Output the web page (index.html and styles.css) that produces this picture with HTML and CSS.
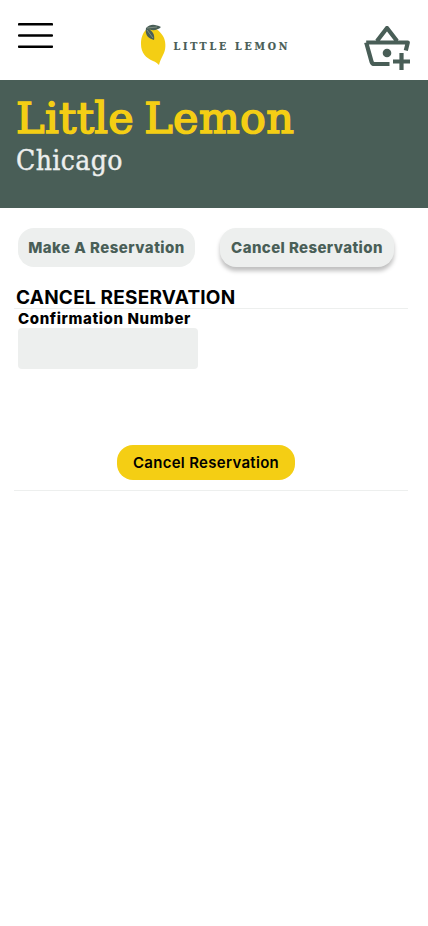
FILE: index.html
```html
<!DOCTYPE html>
<html lang="en">
<head>
<meta charset="utf-8">
<meta name="viewport" content="width=device-width, initial-scale=1">
<title>Little Lemon</title>
<link rel="stylesheet" href="styles.css">
</head>
<body>
<header class="topbar">
  <svg class="menu" viewBox="0 0 35 26" aria-label="Menu"><path d="M1 1.3h33M1 12.5h33M1 23.7h33"/></svg>
  <div class="brand">
    <svg class="lemon" viewBox="0 0 26 42">
      <path class="fruit" d="M7 5C2 9 1 15 1 20c0 9 5 14 12 17 3 1 4 2 6 4 1-4 2-6 4-10 3-5 3-12 1-17C21 7 13 1 7 5Z"/>
      <path class="leaf" d="M6 4c5-5 10-3 15-1-4 4-10 4-15 1ZM6 4c7 2 9 7 8 12C7 14 5 10 6 4Z"/>
      <path class="vein" d="M7 4l10-1M7 6l6 8"/>
    </svg>
    <span class="wordmark">LITTLE LEMON</span>
  </div>
  <svg class="basket" viewBox="0 0 46 44" aria-label="Basket">
    <path d="M2.2 16.5h41.6l-2 8M2.2 16.5l5.4 19.4q.6 2.1 2.8 2.1H25.5M13 15L23 2l10 13"/>
    <path d="M37.5 27v17M29 35.5h17"/>
    <circle cx="23" cy="27" r="4.3"/>
  </svg>
</header>
<section class="hero">
  <h1>Little Lemon</h1>
  <p>Chicago</p>
</section>
<nav class="tabs">
  <button class="tab make">Make A Reservation</button>
  <button class="tab cancel">Cancel Reservation</button>
</nav>
<main class="panel">
  <h2>CANCEL RESERVATION</h2>
  <form>
    <label for="confirmation">Confirmation Number</label>
    <input id="confirmation" type="text">
    <button class="submit" type="button">Cancel Reservation</button>
  </form>
</main>
</body>
</html>
```
FILE: styles.css
```css
* { box-sizing: border-box; margin: 0; padding: 0; }
body { background: #fff; color: #000; font-family: Inter, "Liberation Sans", sans-serif; }
button, input { border: 0; font: inherit; }
svg { display: block; }
.topbar { height: 80px; display: flex; justify-content: space-between; align-items: flex-start; padding: 0 18px; }
.menu { width: 35px; height: 26px; margin-top: 23px; fill: none; stroke: #000; stroke-width: 2.5; stroke-linecap: round; }
.brand { display: flex; align-items: flex-start; width: 150px; margin: 24px 0 0 12px; }
.lemon { width: 26px; height: 42px; flex: none; }
.fruit { fill: #f4ce14; }
.leaf { fill: #495e57; }
.vein { fill: none; stroke: #a5b09f; stroke-width: .6; }
.wordmark { margin: 14px 0 0 8px; font: bold 10.5px/16px "DejaVu Serif Condensed", "DejaVu Serif", serif; letter-spacing: 2.8px; -webkit-text-stroke: .2px #495e57; color: #495e57; white-space: nowrap; }
.basket { width: 46px; height: 44px; margin-top: 26px; fill: none; stroke: #495e57; stroke-width: 4.2; stroke-linejoin: round; }
.basket circle { fill: #495e57; stroke: none; }
.hero { height: 128px; padding: 9px 16px; background: #495e57; }
.hero h1 { font: 500 43px/58px "DejaVu Serif", serif; letter-spacing: .35px; word-spacing: -4px; color: #f4ce14; -webkit-text-stroke: 1.6px #f4ce14; white-space: nowrap; }
.hero p { font: 28px/28px "DejaVu Serif Condensed", "DejaVu Serif", serif; letter-spacing: .4px; -webkit-text-stroke: .4px #edefee; color: #edefee; }
.tabs { display: flex; gap: 25px; padding: 20px 18px 0; }
.tab { height: 39px; border-radius: 16px; background: #edefee; color: #495e57; font-size: 15px; font-weight: 800; letter-spacing: .4px; white-space: nowrap; }
.make { width: 177px; letter-spacing: .47px; }
.cancel { width: 174px; box-shadow: 0 4px 4px rgba(0,0,0,.25); }
.panel { margin: 20px 20px 0 14px; border-bottom: 1px solid #edefee; }
.panel h2 { height: 22px; padding-left: 2px; border-bottom: 1px solid #edefee; font-size: 19px; line-height: 22px; font-weight: 700; letter-spacing: .22px; }
form { height: 181px; padding-left: 4px; display: flex; flex-direction: column; align-items: flex-start; }
label { height: 19px; font-size: 15px; line-height: 19px; font-weight: 800; letter-spacing: .6px; }
input { width: 180px; height: 41px; border-radius: 4px; background: #edefee; }
.submit { width: 178px; height: 35px; margin: 76px 0 0 99px; border-radius: 16px; background: #f4ce14; font-size: 15px; font-weight: 600; letter-spacing: .3px; white-space: nowrap; }
```
